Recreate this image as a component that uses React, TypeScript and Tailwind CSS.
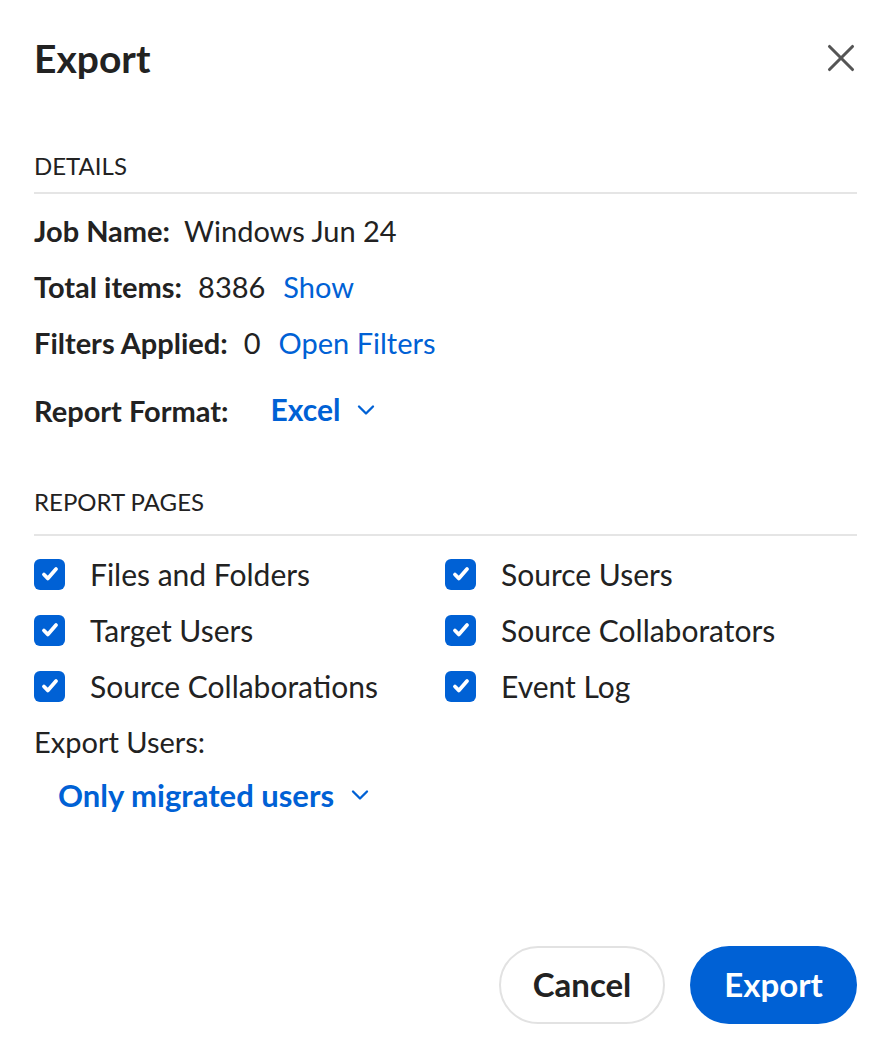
import { X, ChevronDown } from 'lucide-react'

const pages = [
  ['Files and Folders', 'Source Users'],
  ['Target Users', 'Source Collaborators'],
  ['Source Collaborations', 'Event Log'],
]

function Check({ label }: { label: string }) {
  return (
    <div className="flex h-[56px] items-center">
      <span className="flex h-[31px] w-[31px] items-center justify-center rounded-[6px] bg-[#0061d5]">
        <svg width="22" height="22" viewBox="0 0 20 20" fill="none">
          <path d="M4.5 10.5l3.5 3.5 7.5-8.5" stroke="white" strokeWidth="3.4" strokeLinecap="round" strokeLinejoin="round" />
        </svg>
      </span>
      <span className="ml-[25px] text-[30px] text-[#222]">{label}</span>
    </div>
  )
}

export default function App() {
  return (
    <div className="h-[1054px] w-[885px] bg-white pl-[34px] pr-[28px] text-[#222]" style={{ fontFamily: 'Lato, sans-serif' }}>
      <div className="flex h-[120px] items-center justify-between pb-[4px]">
        <h1 className="text-[39px] font-bold">Export</h1>
        <X className="mr-[-7px] h-[46px] w-[46px] text-[#555]" strokeWidth={1.6} />
      </div>

      <div className="flex h-[74px] items-center border-b-2 border-[#e5e5e5] pt-[20px] text-[24px]">DETAILS</div>
      <div className="text-[29px]">
        <div className="flex h-[65px] items-end pb-[7px]"><b className="font-bold">Job Name:</b><span className="ml-[14px]">Windows Jun 24</span></div>
        <div className="flex h-[56px] items-end pb-[7px]"><b>Total items:</b><span className="ml-[16px]">8386</span><span className="ml-[18px] text-[#0061d5]">Show</span></div>
        <div className="flex h-[56px] items-end pb-[7px]"><b>Filters Applied:</b><span className="ml-[16px]">0</span><span className="ml-[18px] text-[#0061d5]">Open Filters</span></div>
        <div className="flex h-[65px] items-end pb-[4px]">
          <b>Report Format:</b>
          <span className="ml-[42px] flex items-center text-[30px] font-bold text-[#0061d5]">Excel<ChevronDown className="ml-[12px] h-[28px] w-[28px]" strokeWidth={2} /></span>
        </div>
      </div>

      <div className="flex h-[100px] items-end border-b-2 border-[#e5e5e5] pb-[14px] text-[24px]">REPORT PAGES</div>
      <div className="pt-[10px]">
        {pages.map(([a, b]) => (
          <div key={a} className="grid grid-cols-[411px_1fr]">
            <Check label={a} />
            <Check label={b} />
          </div>
        ))}
      </div>
      <div className="flex h-[56px] items-center text-[29px]">Export Users:</div>
      <div className="ml-[24px] flex h-[50px] items-center text-[31px] font-bold text-[#0061d5]">
        Only migrated users<ChevronDown className="ml-[12px] h-[28px] w-[28px]" strokeWidth={2} />
      </div>

      <div className="mt-[126px] flex justify-end gap-[25px]">
        <button className="h-[78px] w-[166px] rounded-full border-2 border-[#e2e2e2] bg-white text-[33px] font-bold text-[#222]">Cancel</button>
        <button className="h-[78px] w-[167px] rounded-full bg-[#0061d5] text-[33px] font-bold text-white">Export</button>
      </div>
    </div>
  )
}
